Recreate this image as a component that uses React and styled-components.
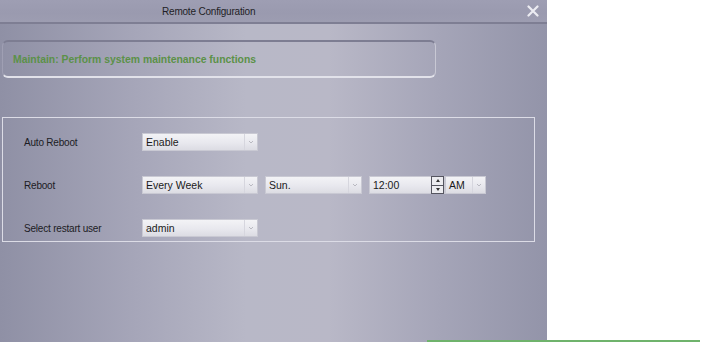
import styled, { createGlobalStyle } from 'styled-components';

const GlobalStyle = createGlobalStyle`
  html, body {
    margin: 0;
    padding: 0;
    background: #ffffff;
    font-family: "Liberation Sans", Arial, sans-serif;
  }
`;

function Select({ value, width }) {
  return (
    <SelectBox $width={width}>
      <SelectValue>{value}</SelectValue>
      <SelectArrow>
        <svg width="6" height="4" viewBox="0 0 6 4">
          <path d="M1 1 L3 3 L5 1" stroke="#b9b9c1" strokeWidth="1" fill="none" />
        </svg>
      </SelectArrow>
    </SelectBox>
  );
}

function TimeInput({ value }) {
  return (
    <TimeBox>
      <TimeValue>{value}</TimeValue>
      <Spinner>
        <SpinButton>
          <svg width="4" height="3" viewBox="0 0 4 3">
            <path d="M0 3 L2 0 L4 3 Z" fill="#333" />
          </svg>
        </SpinButton>
        <SpinButton>
          <svg width="4" height="3" viewBox="0 0 4 3">
            <path d="M0 0 L2 3 L4 0 Z" fill="#333" />
          </svg>
        </SpinButton>
      </Spinner>
    </TimeBox>
  );
}

export default function App() {
  return (
    <>
      <GlobalStyle />
      <Page>
        <Dialog>
          <TitleBar>
            <Title>Remote Configuration</Title>
            <CloseButton>
              <svg width="12" height="12" viewBox="0 0 12 12">
                <path d="M1.5 1.5 L10.5 10.5 M10.5 1.5 L1.5 10.5" stroke="#ececf2" strokeWidth="2.2" strokeLinecap="round" />
              </svg>
            </CloseButton>
          </TitleBar>
          <Body>
            <Banner>Maintain: Perform system maintenance functions</Banner>
            <Panel>
              <Row>
                <Label>Auto Reboot</Label>
                <Select value="Enable" width={116} />
              </Row>
              <Row>
                <Label>Reboot</Label>
                <Controls>
                  <Select value="Every Week" width={116} />
                  <Select value="Sun." width={97} />
                  <TimeInput value="12:00" />
                  <Select value="AM" width={41} />
                </Controls>
              </Row>
              <Row>
                <Label>Select restart user</Label>
                <Select value="admin" width={116} />
              </Row>
            </Panel>
          </Body>
        </Dialog>
        <GreenLine />
      </Page>
    </>
  );
}

const Page = styled.div`
  position: relative;
  display: flex;
  width: 702px;
  height: 342px;
  overflow: hidden;
`;

const Dialog = styled.div`
  display: flex;
  flex-direction: column;
  width: 547px;
  height: 342px;
  background: linear-gradient(
    to right,
    #8f90a5 0%,
    #a6a6b9 25%,
    #b8b8c7 45%,
    #b9b8c7 60%,
    #a5a5b8 80%,
    #9394a9 100%
  );
`;

const TitleBar = styled.div`
  position: relative;
  display: flex;
  align-items: center;
  height: 22px;
  padding-left: 162px;
  background: linear-gradient(to bottom, #9e9eb3 0%, #9a9aaf 60%, #9d9db1 100%);
  border-bottom: 2px solid #7e7e93;
`;

const Title = styled.span`
  font-size: 10px;
  letter-spacing: -0.2px;
  color: #1e1e26;
`;

const CloseButton = styled.div`
  position: absolute;
  right: 7px;
  top: 4px;
  width: 14px;
  height: 14px;
  display: flex;
  align-items: center;
  justify-content: center;
`;

const Body = styled.div`
  display: flex;
  flex-direction: column;
  padding: 16px 0 0 2px;
`;

const Banner = styled.div`
  width: 434px;
  height: 38px;
  box-sizing: border-box;
  display: flex;
  align-items: center;
  padding-left: 10px;
  border-top: 2px solid #7d7d92;
  border-bottom: 2px solid #e2e2ea;
  border-left: 1px solid #9f9fb3;
  border-right: 1px solid #c8c8d4;
  border-radius: 6px;
  font-size: 10.4px;
  font-weight: bold;
  color: #5b9148;
`;

const Panel = styled.div`
  margin-top: 39px;
  width: 533px;
  height: 125px;
  box-sizing: border-box;
  display: flex;
  flex-direction: column;
  gap: 25px;
  padding-top: 15px;
  border: 1px solid #dcdce6;
`;

const Row = styled.div`
  display: flex;
  align-items: center;
  height: 18px;
`;

const Label = styled.div`
  width: 118px;
  padding-left: 21px;
  font-size: 10px;
  letter-spacing: -0.2px;
  color: #1c1c24;
  white-space: nowrap;
`;

const Controls = styled.div`
  display: flex;
  align-items: center;
  gap: 7px;
`;

const SelectBox = styled.div`
  display: flex;
  width: ${(p) => p.$width}px;
  height: 18px;
  box-sizing: border-box;
  background: linear-gradient(to bottom, #f3f3f6 0%, #e8e8ee 55%, #dcdce3 100%);
  border: 1px solid #c9c9d3;
`;

const SelectValue = styled.div`
  flex: 1;
  display: flex;
  align-items: center;
  padding-left: 3px;
  font-size: 10.5px;
  color: #1a1a1a;
  overflow: hidden;
  white-space: nowrap;
`;

const SelectArrow = styled.div`
  width: 12px;
  display: flex;
  align-items: center;
  justify-content: center;
  border-left: 1px solid #d6d6de;
`;

const TimeBox = styled.div`
  display: flex;
  width: 76px;
  height: 18px;
  margin-right: -7px;
  box-sizing: border-box;
  background: linear-gradient(to bottom, #f3f3f6 0%, #e8e8ee 55%, #dcdce3 100%);
  border: 1px solid #c9c9d3;
`;

const TimeValue = styled.div`
  flex: 1;
  display: flex;
  align-items: center;
  padding-left: 3px;
  font-size: 10.5px;
  color: #1a1a1a;
`;

const Spinner = styled.div`
  display: flex;
  flex-direction: column;
  width: 11px;
  border: 1px solid #555560;
  margin: -1px 0;
`;

const SpinButton = styled.div`
  flex: 1;
  display: flex;
  align-items: center;
  justify-content: center;
  background: #ececf0;
  & + & {
    border-top: 1px solid #555560;
  }
`;

const GreenLine = styled.div`
  position: absolute;
  left: 427px;
  bottom: 0;
  width: 273px;
  height: 2px;
  background: #6fb36c;
`;
